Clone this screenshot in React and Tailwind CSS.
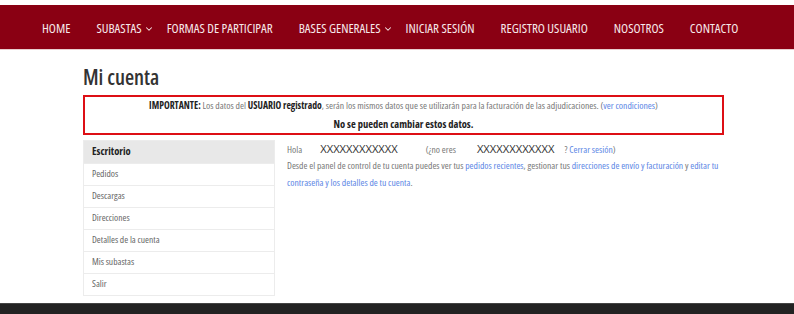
import { ChevronDown } from 'lucide-react';

const NAV = [
  { label: 'HOME' },
  { label: 'SUBASTAS', caret: true },
  { label: 'FORMAS DE PARTICIPAR' },
  { label: 'BASES GENERALES', caret: true },
  { label: 'INICIAR SESIÓN' },
  { label: 'REGISTRO USUARIO' },
  { label: 'NOSOTROS' },
  { label: 'CONTACTO' },
];

const MENU = ['Escritorio', 'Pedidos', 'Descargas', 'Direcciones', 'Detalles de la cuenta', 'Mis subastas', 'Salir'];

function Link({ children }) {
  return <a className="text-[#5b86e5] cursor-pointer">{children}</a>;
}

export default function App() {
  return (
    <div className="min-h-[314px] bg-white flex flex-col font-['Open_Sans',sans-serif] [font-stretch:75%]">
      <nav className="mt-[5px] h-[45px] pt-[3px] bg-[#8a0013] border-b border-[#e8cfcf] flex items-center pl-[42px] gap-[26px] text-[13px] text-[#f7e9ea]">
        {NAV.map((n) => (
          <span key={n.label} className={`flex items-center gap-[2px] whitespace-nowrap ${n.caret ? 'mr-[-13px]' : ''}`}>
            {n.label}
            {n.caret && <ChevronDown size={10} strokeWidth={2.5} />}
          </span>
        ))}
      </nav>

      <main className="flex-1 pl-[83px] w-[724px]">
        <h1 className="mt-[14px] text-[21px] leading-[26px] font-semibold text-[#333]">Mi cuenta</h1>

        <div className="mt-[5px] border-2 border-[#dd0f15] h-[40px] flex flex-col items-center justify-center text-[9.7px] leading-[19px] text-[#777]">
          <p>
            <b className="text-[#222]">IMPORTANTE:</b> Los datos del <b className="text-[#222]">USUARIO registrado</b>, serán los mismos datos que se utilizarán para la facturación de las adjudicaciones. (<Link>ver condiciones</Link>)
          </p>
          <p className="font-bold text-[#222] text-[10.5px]">No se pueden cambiar estos datos.</p>
        </div>

        <div className="mt-[5px] flex gap-[12px]">
          <ul className="w-[192px] shrink-0 border border-[#ececec] text-[9.5px] text-[#666]">
            {MENU.map((m, i) => (
              <li
                key={m}
                className={`h-[22px] flex items-center px-[8px] ${i > 0 ? 'border-t border-[#ececec]' : ''} ${i === 0 ? 'bg-[#e8e8e8] font-bold text-[#222] text-[10.5px]' : ''}`}
              >
                {m}
              </li>
            ))}
          </ul>

          <div className="flex-1 text-[9.6px] leading-[17px] text-[#777]">
            <p className="flex items-baseline h-[17px]">
              <span>Hola</span>
              <span className="ml-[18px] text-[11.2px] text-[#333] [font-stretch:100%]">XXXXXXXXXXXX</span>
              <span className="ml-[28px]">(¿no eres</span>
              <span className="ml-[21px] text-[11.2px] text-[#333] [font-stretch:100%]">XXXXXXXXXXXX</span>
              <span className="ml-[10px]">? <Link>Cerrar sesión</Link>)</span>
            </p>
            <p>
              Desde el panel de control de tu cuenta puedes ver tus <Link>pedidos recientes</Link>, gestionar tus <Link>direcciones de envío y facturación</Link> y <Link>editar tu contraseña y los detalles de tu cuenta</Link>.
            </p>
          </div>
        </div>
      </main>

      <footer className="h-[11px] bg-[#222] border-t border-[#444]" />
    </div>
  );
}
